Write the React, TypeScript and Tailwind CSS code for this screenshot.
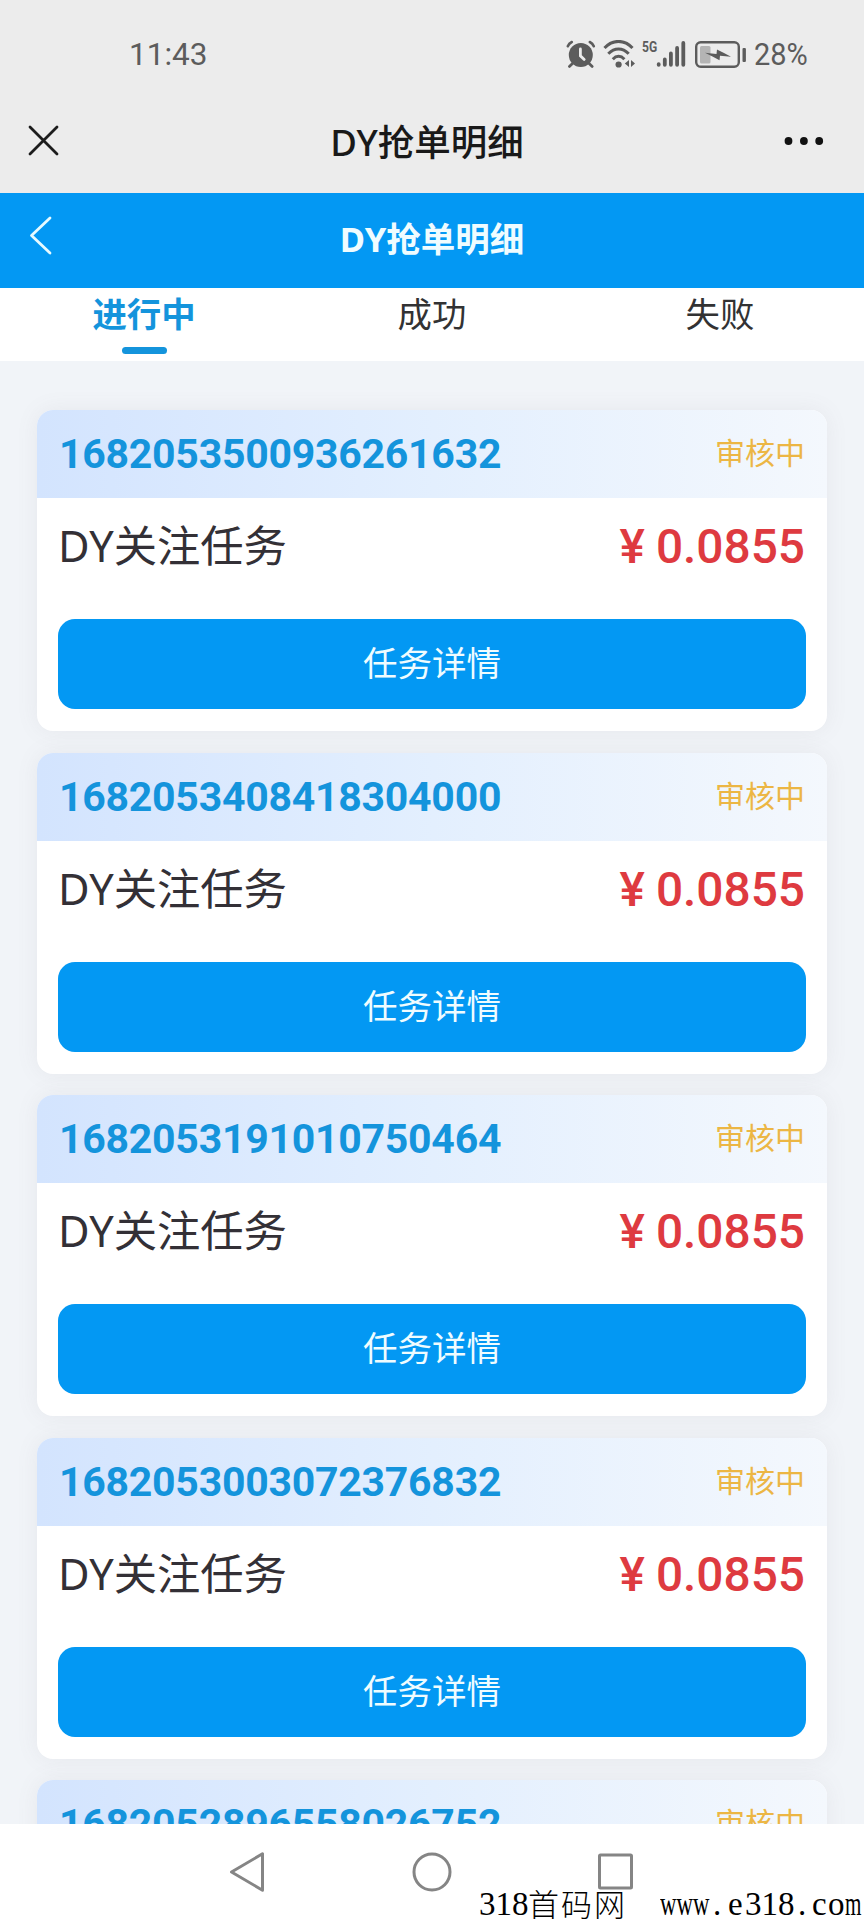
const orders = [
    "1682053500936261632",
    "1682053408418304000",
    "1682053191010750464",
    "1682053003072376832",
    "1682052896558026752",
];

const StatusBar = () => {
    return (
        <div className="flex h-[96px] items-start justify-between pt-[35px] pr-[54px] pl-[129px] font-[Roboto,sans-serif] text-[#5c5c5c]">
            <span className="text-[31.5px] leading-[40px]">11:43</span>
            <div className="flex items-start">
                <svg
                    width="30"
                    height="30"
                    viewBox="0 0 30 30"
                    className="mt-[5px]"
                    fill="none"
                    stroke="currentColor"
                    strokeLinecap="round"
                >
                    <circle cx="14.8" cy="15" r="12" fill="currentColor" stroke="none" />
                    <path d="M1.8 6.2C2.6 4.2 4 2.8 5.8 2M27.8 6.2C27 4.2 25.6 2.8 23.8 2" strokeWidth="2.6" />
                    <path d="M6.5 23.5L3.4 26.4M23.1 23.5L26.2 26.4" strokeWidth="2.8" />
                    <path d="M14.4 9V15.8L18.2 19.4" stroke="#ececec" strokeWidth="2.8" />
                </svg>
                <svg
                    width="33"
                    height="30"
                    viewBox="0 0 33 30"
                    className="mt-[5px] ml-[7px]"
                    fill="none"
                    stroke="currentColor"
                    strokeWidth="3"
                >
                    <path d="M1.5 8C9.5-.8 21.5-.8 29.5 8" />
                    <path d="M5.3 13.8C11.5 7.4 19.5 7.4 25.7 13.8" />
                    <path d="M9.8 19.2C13.4 15.4 17.8 15.4 21.4 19.2" />
                    <circle cx="15.6" cy="24.5" r="3.1" fill="currentColor" stroke="none" />
                    <path d="M26 20V27L21.8 23.5ZM28 20V27L32 23.5Z" fill="currentColor" stroke="none" />
                </svg>
                <span className="mt-[5px] ml-[6px] w-[14px] origin-left scale-x-[0.78] text-[15.5px] leading-[14px] font-bold">
                    5G
                </span>
                <svg
                    width="30"
                    height="27"
                    viewBox="0 0 30 27"
                    className="mt-[5px]"
                    stroke="currentColor"
                    strokeWidth="3.8"
                    strokeLinecap="round"
                >
                    <path d="M2.7 24.8V24.2M8.8 24.8V19.5M14.9 24.8V13.5M21.1 24.8V8M27.3 24.8V3" />
                </svg>
                <svg
                    width="53"
                    height="28"
                    viewBox="0 0 53 28"
                    className="mt-[6px] ml-[9px]"
                >
                    <rect x="1.2" y="1.2" width="42.6" height="24.6" rx="4.5" fill="none" stroke="currentColor" strokeWidth="2.4" />
                    <rect x="5" y="5" width="10.5" height="17.5" rx="1.5" fill="#b4b4b4" />
                    <path d="M10 11.8L21.5 13L22 8.5L29 12L36 15.8L25 14.8L24.5 19.3L17.5 15.6Z" fill="currentColor" />
                    <rect x="47.5" y="7" width="3.4" height="14" rx="1" fill="currentColor" />
                </svg>
                <span className="ml-[6px] w-[56px] origin-left scale-x-[0.95] text-[30.5px] leading-[40px]">
                    28%
                </span>
            </div>
        </div>
    );
};

const TitleBar = () => {
    return (
        <div className="grid h-[97px] grid-cols-3 items-start px-[28px]">
            <svg
                width="32"
                height="32"
                viewBox="0 0 32 32"
                className="mt-[29px]"
                stroke="#1c1c1c"
                strokeWidth="2.8"
                strokeLinecap="round"
            >
                <path d="M2 2L29 29M29 2L2 29" />
            </svg>
            <h1 className="mt-[22px] ml-[-10px] text-center font-['Noto_Sans','Noto_Sans_CJK_SC',sans-serif] text-[36.5px] leading-[48px] font-medium whitespace-nowrap text-[#191919]">
                DY抢单明细
            </h1>
            <svg
                width="42"
                height="10"
                viewBox="0 0 42 10"
                className="mt-[40px] mr-[12px] justify-self-end"
                fill="#111"
            >
                <circle cx="6.5" cy="5" r="3.9" />
                <circle cx="21.9" cy="5" r="3.9" />
                <circle cx="37.2" cy="5" r="3.9" />
            </svg>
        </div>
    );
};

const NavBar = () => {
    return (
        <div className="grid h-[95px] grid-cols-3 items-start bg-[#0398f3] px-[28px] text-white">
            <svg
                width="26"
                height="40"
                viewBox="0 0 26 40"
                className="mt-[22px]"
                fill="none"
                stroke="#e6faff"
                strokeWidth="2.8"
                strokeLinecap="round"
                strokeLinejoin="round"
            >
                <path d="M22 3L3.5 20.5L22 38" />
            </svg>
            <h2 className="mt-[22px] text-center font-['Noto_Sans','Noto_Sans_CJK_SC',sans-serif] text-[34.5px] leading-[48px] font-bold whitespace-nowrap text-[#effcff]">
                DY抢单明细
            </h2>
        </div>
    );
};

const Tabs = () => {
    return (
        <div className="grid h-[73px] grid-cols-3 bg-white text-center text-[34.4px] leading-[48px] text-[#323233]">
            <div className="flex flex-col items-center font-bold text-[#1494dc]">
                进行中
                <span className="mt-[11px] h-[7px] w-[45px] rounded-full bg-[#1494dc]" />
            </div>
            <div>成功</div>
            <div>失败</div>
        </div>
    );
};

const OrderCard = ({ id }: { id: string }) => {
    return (
        <div className="mb-[21.5px] h-[321px] shrink-0 overflow-hidden rounded-[16px] bg-white shadow-[0_0_22px_rgba(120,110,120,0.09)]">
            <div className="flex h-[88px] items-center justify-between bg-linear-to-r from-[#d3e4fe] via-[#e3effe] to-[#f4f8fd] pr-[22px] pl-[22px]">
                <span className="font-[Roboto,sans-serif] text-[41px] leading-[48px] font-bold tracking-[-0.25px] text-[#1494dc]">
                    {id}
                </span>
                <span className="-mt-[6px] text-[30px] leading-[40px] text-[#ecb644]">
                    审核中
                </span>
            </div>
            <div className="flex h-[121px] items-start justify-between pr-[22px] pl-[21px]">
                <span className="mt-[18px] font-['Noto_Sans','Noto_Sans_CJK_SC',sans-serif] text-[43.3px] leading-[60px] text-[#333036]">
                    DY关注任务
                </span>
                <span className="mt-[17px] flex items-baseline font-[Roboto,sans-serif] text-[47.8px] leading-[64px] font-medium text-[#de3a40]">
                    <span className="mr-[11px]">¥</span>
                    0.0855
                </span>
            </div>
            <button className="mx-[21px] block h-[90px] w-[748px] rounded-[17px] bg-[#0398f3] pb-[4px] text-[34.5px] text-[#effcff]">
                任务详情
            </button>
        </div>
    );
};

const SystemNav = () => {
    return (
        <div className="relative h-[96px] bg-white">
            <svg
                width="864"
                height="96"
                viewBox="0 0 864 96"
                fill="none"
                stroke="#858585"
                strokeWidth="3"
                strokeLinejoin="round"
            >
                <path d="M231.5 48L262.5 29.8V66.2Z" />
                <circle cx="432" cy="48" r="18" />
                <rect x="599.5" y="31" width="32" height="33" rx="1" />
            </svg>
            <div className="absolute bottom-0 left-[479px] flex h-[32px] items-center font-['Liberation_Serif',serif] text-[33px] leading-[32px] whitespace-pre text-black">
                <span className="w-[49px]">318</span>
                <span className="w-[132px] pb-[2px] font-['Noto_Sans_CJK_SC',sans-serif] text-[31px] tracking-[2px] font-light">
                    首码网
                </span>
                <span className="w-[50px] origin-left scale-x-[0.69]">www</span>
                <span className="w-[18px] pl-[3px]">.</span>
                <span className="w-[17px]">e</span>
                <span className="w-[50px]">318</span>
                <span className="w-[17px] pl-[3px]">.</span>
                <span className="w-[16px]">c</span>
                <span className="w-[17px]">o</span>
                <span className="w-[17px] origin-left scale-x-[0.64]">m</span>
            </div>
        </div>
    );
};

const App = () => {
    return (
        <div className="flex h-[1920px] w-[864px] flex-col overflow-hidden bg-[#ececec] font-['Noto_Sans_CJK_SC',sans-serif]">
            <StatusBar />
            <TitleBar />
            <NavBar />
            <Tabs />
            <div className="flex h-[1463px] flex-col overflow-hidden bg-[#f1f4f8] px-[37px] pt-[49px]">
                {orders.map((id) => (
                    <OrderCard key={id} id={id} />
                ))}
            </div>
            <SystemNav />
        </div>
    );
};

export default App;
